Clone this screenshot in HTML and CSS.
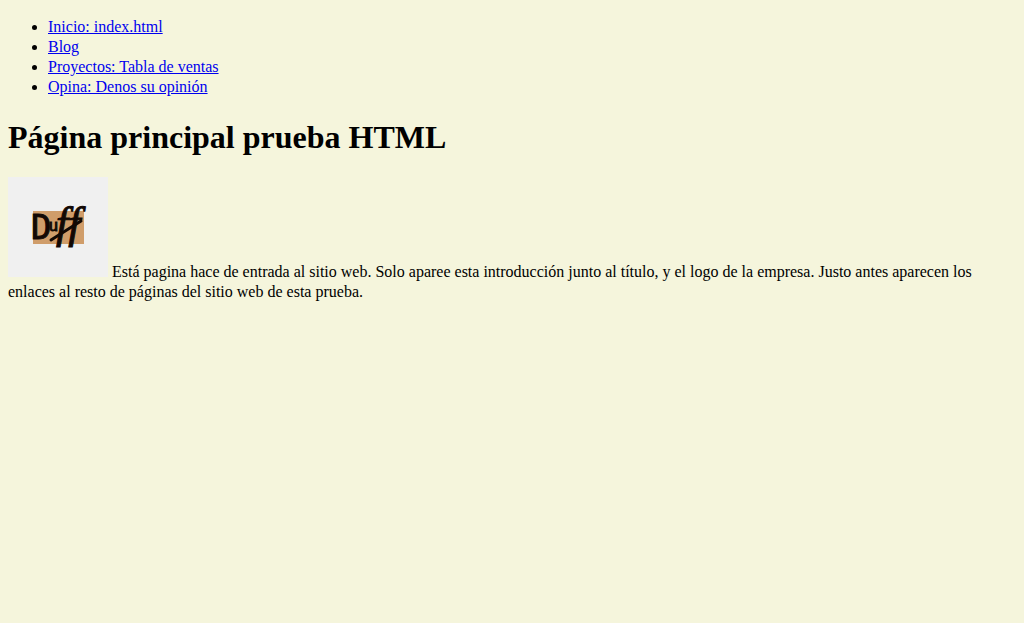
FILE: index.html
```
<!DOCTYPE html>
<html lang="es">
<head>
<meta charset="utf-8">
<title>Página principal</title>
<link rel="stylesheet" href="styles.css">
</head>
<body class="page">
<nav>
<ul class="links">
<li><a href="index.html">Inicio: index.html</a></li>
<li><a href="blog.html">Blog</a></li>
<li><a href="proyectos.html">Proyectos: Tabla de ventas</a></li>
<li><a href="opina.html">Opina: Denos su opinión</a></li>
</ul>
</nav>
<main>
<h1 class="title">Página principal prueba HTML</h1>
<p class="intro"><svg class="logo" width="100" height="100" viewBox="0 0 100 100" role="img" aria-label="Duff">
<rect width="100" height="100" fill="#f0f0f0"/>
<rect x="25" y="34" width="51" height="33" fill="#d09d6a"/>
<text class="logo-letters"><tspan class="logo-d" x="23" y="62">D</tspan><tspan class="logo-u" x="41" y="54">u</tspan><tspan class="logo-f" x="48" y="61">ff</tspan></text>
<path d="M43 63 L73 44" fill="none" stroke="#120804" stroke-width="3" stroke-linecap="round"/>
</svg> Está pagina hace de entrada al sitio web. Solo aparee esta introducción junto al título, y el logo de la empresa. Justo antes aparecen los enlaces al resto de páginas del sitio web de esta prueba.</p>
</main>
</body>
</html>
```
FILE: styles.css
```
.page {
  margin: 0;
  padding: 1px 8px;
  background: beige;
  color: #000;
  font-family: "Liberation Serif", "Times New Roman", serif;
  font-size: 16px;
  line-height: 20px;
}

.links {
  margin: 16px 0 0;
  padding-left: 40px;
}

.links a {
  color: #0000ee;
}

.title {
  margin: 20px 0;
  font-size: 32px;
  line-height: 40px;
}

.intro {
  margin: 0;
}

.logo {
  vertical-align: baseline;
}

.logo-letters {
  fill: #120804;
  stroke: #120804;
  stroke-width: 1px;
}

.logo-d {
  font: 34px "DejaVu Sans Mono", monospace;
}

.logo-u {
  font: 16px "Liberation Sans", sans-serif;
}

.logo-f {
  font: italic 44px "Liberation Serif", serif;
}
```
